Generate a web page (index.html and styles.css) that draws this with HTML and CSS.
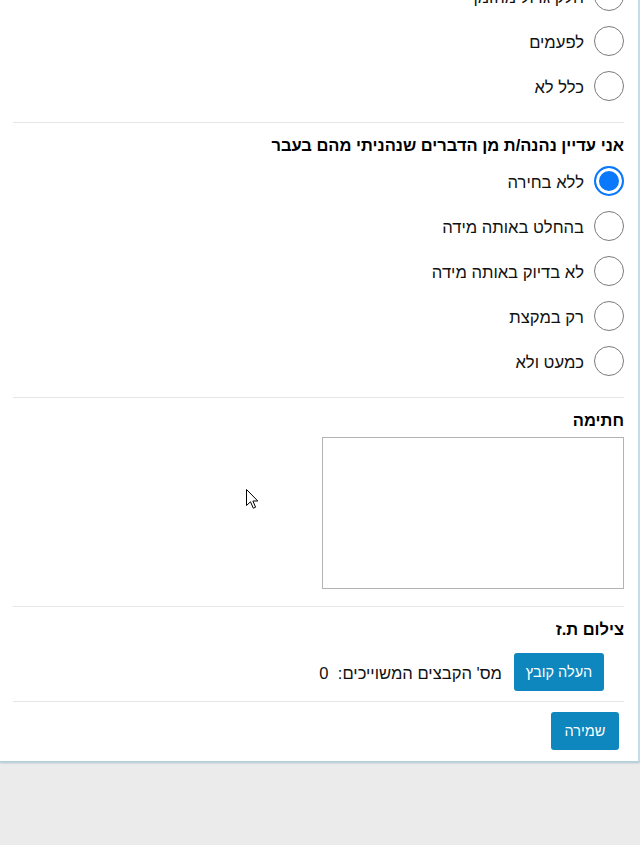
FILE: index.html
```html
<!DOCTYPE html>
<html lang="he" dir="rtl">
<head>
<meta charset="utf-8">
<title>טופס</title>
<link rel="stylesheet" href="styles.css">
</head>
<body>
<form class="card">
  <section class="sec sec-first">
    <div class="options">
      <label class="opt"><input class="radio" type="radio" name="q1"><span class="opt-text">חלק גדול מהזמן</span></label>
      <label class="opt"><input class="radio" type="radio" name="q1"><span class="opt-text">לפעמים</span></label>
      <label class="opt"><input class="radio" type="radio" name="q1"><span class="opt-text">כלל לא</span></label>
    </div>
  </section>

  <section class="sec sec-q">
    <h3 class="sec-title">אני עדיין נהנה/ת מן הדברים שנהניתי מהם בעבר</h3>
    <div class="options">
      <label class="opt"><input class="radio" type="radio" name="q2" checked><span class="opt-text">ללא בחירה</span></label>
      <label class="opt"><input class="radio" type="radio" name="q2"><span class="opt-text">בהחלט באותה מידה</span></label>
      <label class="opt"><input class="radio" type="radio" name="q2"><span class="opt-text">לא בדיוק באותה מידה</span></label>
      <label class="opt"><input class="radio" type="radio" name="q2"><span class="opt-text">רק במקצת</span></label>
      <label class="opt"><input class="radio" type="radio" name="q2"><span class="opt-text">כמעט ולא</span></label>
    </div>
  </section>

  <section class="sec sec-sign">
    <h3 class="sec-title">חתימה</h3>
    <div class="sign-box"></div>
  </section>

  <section class="sec sec-upload">
    <h3 class="sec-title">צילום ת.ז</h3>
    <div class="upload-row">
      <button type="button" class="btn btn-upload">העלה קובץ</button>
      <span class="files-count">מס' הקבצים המשוייכים:&nbsp; 0</span>
    </div>
  </section>

  <section class="sec sec-save">
    <button type="button" class="btn btn-save">שמירה</button>
  </section>
</form>

<svg class="cursor" width="13" height="21" viewBox="0 0 13 21" aria-hidden="true">
  <path d="M0.5 0.5 L0.5 16.5 L4.5 12.8 L7.3 19.2 L9.6 18.2 L6.9 12 L11.8 12 Z" fill="#fff" stroke="#000" stroke-width="1" stroke-linejoin="miter"/>
</svg>
</body>
</html>
```

FILE: styles.css
```css
html, body {
  margin: 0;
  padding: 0;
}

body {
  background: #ebebeb;
  font-family: "Liberation Sans", Arial, "DejaVu Sans", sans-serif;
  color: #111;
  position: relative;
  min-height: 845px;
}

.card {
  box-sizing: border-box;
  width: 640px;
  margin-top: -27px;
  padding: 0 14px 0 13px;
  background: #fff;
  border-right: 2px solid #c2dce8;
  border-bottom: 1px solid #b4d0de;
  box-shadow: 0 1px 2px rgba(60, 120, 160, 0.35);
}

.sec {
  border-bottom: 1px solid #e6e6e6;
}

.sec-first {
  padding-bottom: 14px;
}

.sec-q {
  padding: 12px 0 14px;
}

.sec-sign {
  padding: 12px 0 17px;
}

.sec-upload {
  padding: 12px 0 10px;
}

.sec-save {
  border-bottom: none;
  padding: 10px 0 11px;
  display: flex;
}

.sec-title {
  margin: 0;
  font-size: 16.5px;
  line-height: 20px;
  font-weight: bold;
  color: #000;
}

.sec-q .sec-title {
  margin-bottom: 3px;
}

.options {
  display: flex;
  flex-direction: column;
}

.opt {
  display: flex;
  align-items: center;
  gap: 10px;
  height: 45px;
}

.radio {
  appearance: none;
  -webkit-appearance: none;
  box-sizing: border-box;
  width: 30px;
  height: 30px;
  margin: 0;
  border: 1px solid #7b7b7b;
  border-radius: 50%;
  background: #fff;
  flex: none;
}

.radio:checked {
  border: 2px solid #0a78fb;
  background: #0a78fb;
  box-shadow: inset 0 0 0 3px #fff;
}

.opt-text {
  font-size: 16.6px;
  line-height: 20px;
  padding-top: 5px;
  color: #111;
}

.sign-box {
  box-sizing: border-box;
  width: 302px;
  height: 152px;
  margin-top: 7px;
  border: 1px solid #b3b3b3;
  background: #fff;
}

.upload-row {
  display: flex;
  align-items: center;
  gap: 12px;
  margin-top: 14px;
  padding-right: 20px;
}

.btn {
  box-sizing: border-box;
  height: 38px;
  border: none;
  border-radius: 3px;
  background: #0d87bd;
  color: #fff;
  font-family: "Liberation Sans", Arial, "DejaVu Sans", sans-serif;
  font-size: 14.5px;
  padding: 0;
  margin: 0;
}

.btn-upload {
  width: 90px;
}

.btn-save {
  width: 68px;
  margin-right: 5px;
}

.files-count {
  font-size: 16.6px;
  line-height: 20px;
  padding-top: 3px;
  color: #111;
}

.cursor {
  position: absolute;
  left: 246px;
  top: 489px;
}
```
